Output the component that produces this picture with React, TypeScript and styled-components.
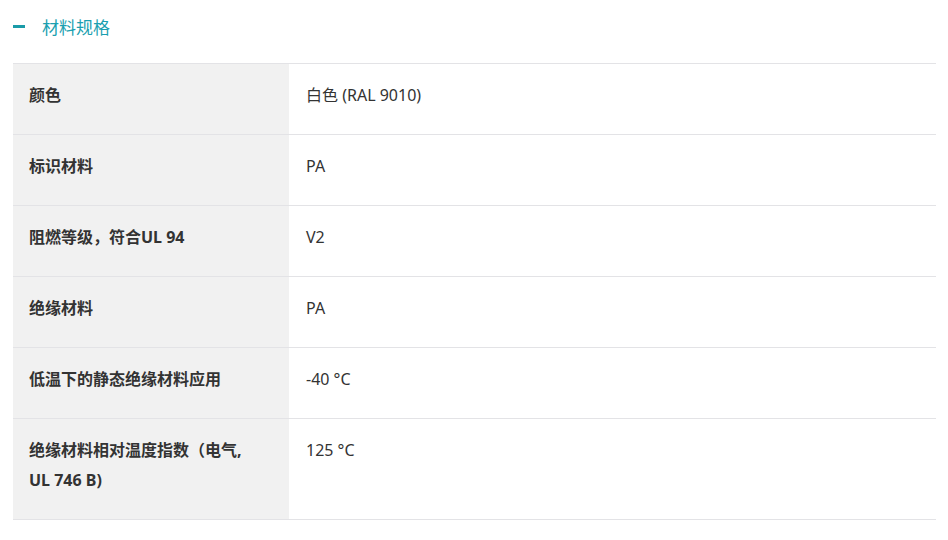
import React from "react";
import styled, { createGlobalStyle } from "styled-components";

const GlobalStyle = createGlobalStyle`
  html, body {
    margin: 0;
    padding: 0;
    background: #ffffff;
  }
  body {
    font-family: "Noto Sans", "Noto Sans CJK SC", sans-serif;
    color: #333333;
  }
`;

interface SpecRow {
  label: string;
  value: string;
}

const rows: SpecRow[] = [
  { label: "颜色", value: "白色 (RAL 9010)" },
  { label: "标识材料", value: "PA" },
  { label: "阻燃等级，符合UL 94", value: "V2" },
  { label: "绝缘材料", value: "PA" },
  { label: "低温下的静态绝缘材料应用", value: "-40 °C" },
  { label: "绝缘材料相对温度指数（电气, UL 746 B)", value: "125 °C" },
];

const App: React.FC = () => {
  return (
    <>
      <GlobalStyle />
      <Section>
        <Header>
          <Dash />
          <Title>材料规格</Title>
        </Header>
        <Table>
          {rows.map((row) => (
            <Row key={row.label}>
              <Label>{row.label}</Label>
              <Value>{row.value}</Value>
            </Row>
          ))}
        </Table>
      </Section>
    </>
  );
};

const Section = styled.div`
  width: 923px;
  padding-left: 13px;
`;

const Header = styled.div`
  display: flex;
  align-items: center;
  height: 52px;
  margin-bottom: 11px;
`;

const Dash = styled.span`
  display: block;
  width: 12px;
  height: 3px;
  background: #1a9ba8;
  margin-right: 17px;
`;

const Title = styled.span`
  font-size: 17px;
  color: #1a9fb0;
  font-family: "Noto Sans CJK SC", sans-serif;
`;

const Table = styled.div`
  display: flex;
  flex-direction: column;
  border-bottom: 1px solid #e3e3e6;
`;

const Row = styled.div`
  display: grid;
  grid-template-columns: 276px 1fr;
  border-top: 1px solid #e3e3e6;
`;

const Cell = styled.div`
  padding: 16px 16px 24px 16px;
  font-size: 16px;
  line-height: 30px;
`;

const Label = styled(Cell)`
  background: #f1f1f1;
  font-weight: 700;
  color: #333333;
  padding-right: 36px;
`;

const Value = styled(Cell)`
  padding-left: 17px;
  color: #333333;
`;

export default App;
